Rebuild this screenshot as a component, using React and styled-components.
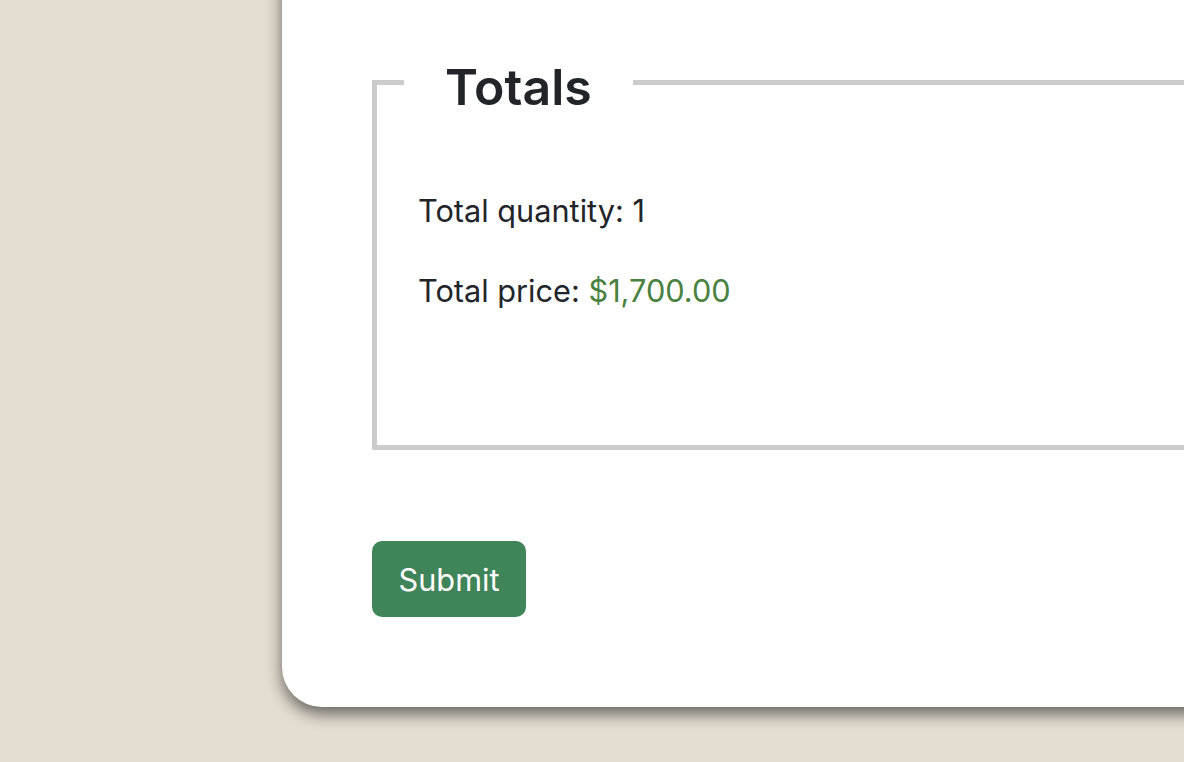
import React from 'react';
import styled, { createGlobalStyle } from 'styled-components';

const GlobalStyle = createGlobalStyle`
  html, body {
    margin: 0;
    padding: 0;
    background: #e4ddd1;
    font-family: Inter, "Noto Sans", "Liberation Sans", sans-serif;
    color: #212529;
    overflow: hidden;
  }
`;

const Page = styled.div`
  height: 762px;
  padding-left: 282px;
  overflow: hidden;
`;

const Card = styled.div`
  width: 1200px;
  margin-top: -60px;
  padding: 111px 90px 90px;
  background: #fff;
  border-radius: 40px;
  box-shadow: 0 7px 16px rgba(0, 0, 0, 0.55);
`;

const Fieldset = styled.fieldset`
  margin: 0;
  padding: 80px 41px 136px;
  border: 5px solid #cccccc;
  border-right: none;
`;

const Legend = styled.legend`
  margin-left: -14px;
  padding: 11px 41px 1px;
  font-size: 50px;
  font-weight: 600;
  line-height: 1;
`;

const Line = styled.p`
  margin: 0 0 44px;
  font-size: 30.7px;
  line-height: 36px;

  &:last-child {
    margin-bottom: 0;
  }
`;

const Price = styled.span`
  color: #4a813f;
`;

const SubmitButton = styled.button`
  display: block;
  margin-top: 91px;
  width: 154px;
  height: 76px;
  padding: 0;
  border: none;
  border-radius: 10px;
  background: #40845a;
  color: #fff;
  font-family: inherit;
  font-size: 30.7px;
  cursor: pointer;
`;

export default function App() {
  return (
    <>
      <GlobalStyle />
      <Page>
        <Card>
          <Fieldset>
            <Legend>Totals</Legend>
            <Line>Total quantity: 1</Line>
            <Line>
              Total price: <Price>$1,700.00</Price>
            </Line>
          </Fieldset>
          <SubmitButton>Submit</SubmitButton>
        </Card>
      </Page>
    </>
  );
}
